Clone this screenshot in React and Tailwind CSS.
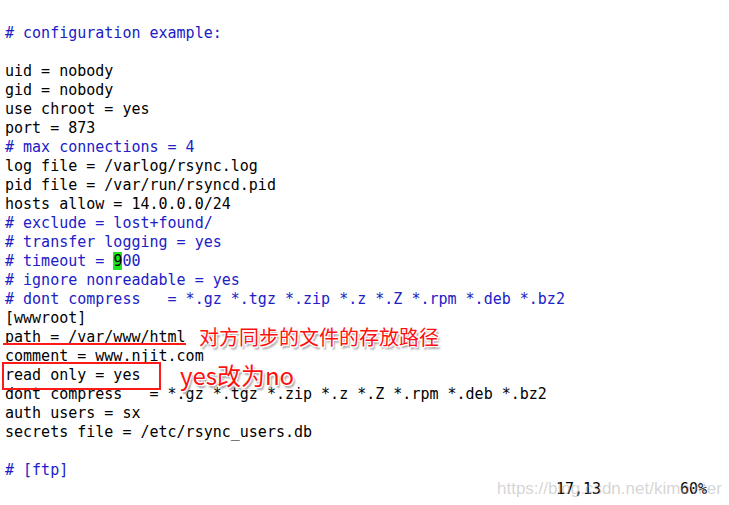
const C = "text-[#2020c6]";

const lines = [
  { t: "# configuration example:", c: true },
  { t: "" },
  { t: "uid = nobody" },
  { t: "gid = nobody" },
  { t: "use chroot = yes" },
  { t: "port = 873" },
  { t: "# max connections = 4", c: true },
  { t: "log file = /varlog/rsync.log" },
  { t: "pid file = /var/run/rsyncd.pid" },
  { t: "hosts allow = 14.0.0.0/24" },
  { t: "# exclude = lost+found/", c: true },
  { t: "# transfer logging = yes", c: true },
  { t: "timeout", c: true },
  { t: "# ignore nonreadable = yes", c: true },
  { t: "# dont compress   = *.gz *.tgz *.zip *.z *.Z *.rpm *.deb *.bz2", c: true },
  { t: "[wwwroot]" },
  { t: "path = /var/www/html" },
  { t: "comment = www.njit.com" },
  { t: "read only = yes" },
  { t: "dont compress   = *.gz *.tgz *.zip *.z *.Z *.rpm *.deb *.bz2" },
  { t: "auth users = sx" },
  { t: "secrets file = /etc/rsync_users.db" },
  { t: "" },
  { t: "# [ftp]", c: true },
];

const note =
  "font-['Noto_Sans_CJK_SC','Noto_Sans',sans-serif] text-[#ff1010] [text-shadow:1px_1px_0_#fff,-1px_-1px_0_#fff,1px_-1px_0_#fff,-1px_1px_0_#fff,2px_3px_2px_#9a9a9a]";

export default function App() {
  return (
    <div className="relative w-[729px] h-[505px] bg-white overflow-hidden font-['DejaVu_Sans_Mono',monospace] text-[15px] leading-[19px] text-black">
      <div className="flex flex-col pt-[24px] pl-[5px]">
        {lines.map((l, i) => (
          <div key={i} className={`h-[19px] whitespace-pre ${l.c ? C : ""}`}>
            {l.t === "timeout" ? (
              <>
                # timeout = <span className="bg-[#1ee31e] text-black">9</span>00
              </>
            ) : (
              l.t || " "
            )}
          </div>
        ))}
        <div className="h-[19px] flex whitespace-pre">
          <span className="ml-[551px] w-[124px]">17,13</span>
          <span>60%</span>
        </div>
      </div>

      {/* annotations drawn over the text */}
      <div className="absolute left-[3px] top-[343px] w-[183px] h-[2px] bg-[#ff1a1a]" />
      <div className="absolute left-[2px] top-[362px] w-[159px] h-[28px] border-2 border-[#ff1a1a]" />
      <div className={`absolute left-[199px] top-[323px] text-[20px] leading-[28px] whitespace-nowrap ${note}`}>
        对方同步的文件的存放路径
      </div>
      <div className={`absolute left-[180px] top-[359px] text-[24px] leading-[32px] whitespace-nowrap ${note}`}>
        yes改为no
      </div>

      <div className="absolute left-[497px] top-[478px] font-['Liberation_Sans',Arial,sans-serif] text-[17px] leading-[22px] text-[rgba(160,160,160,0.45)] whitespace-nowrap">
        https://blog.csdn.net/kimoviter
      </div>
    </div>
  );
}
